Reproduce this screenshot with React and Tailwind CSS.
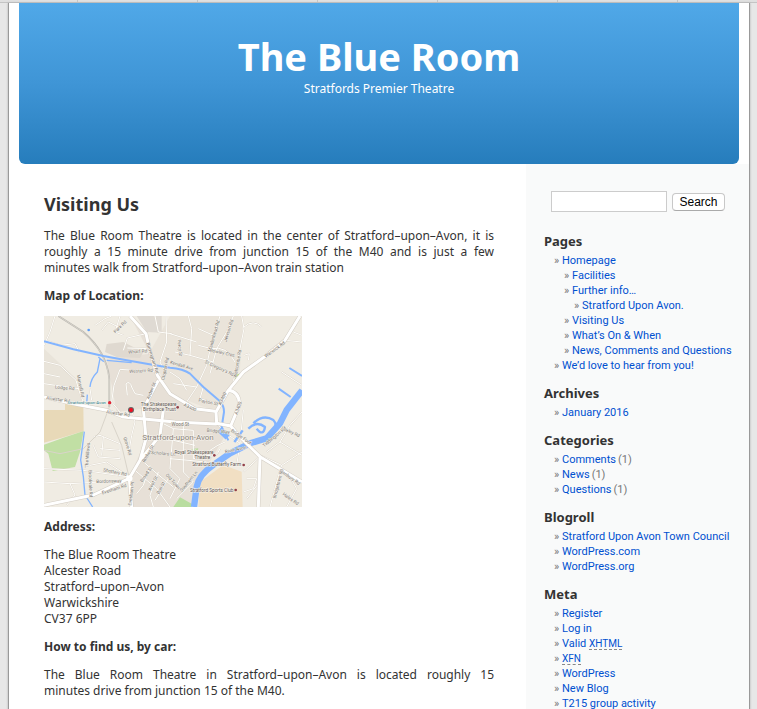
import React from "react";

const sans = "font-['Noto_Sans','Open_Sans',sans-serif]";

const sections = [
  {
    title: "Pages",
    items: [
      {
        label: "Homepage",
        children: [
          { label: "Facilities" },
          { label: "Further info…", children: [{ label: "Stratford Upon Avon." }] },
          { label: "Visiting Us" },
          { label: "What’s On & When" },
          { label: "News, Comments and Questions" },
        ],
      },
      { label: "We’d love to hear from you!" },
    ],
  },
  { title: "Archives", items: [{ label: "January 2016" }] },
  {
    title: "Categories",
    items: [
      { label: "Comments", count: 1 },
      { label: "News", count: 1 },
      { label: "Questions", count: 1 },
    ],
  },
  {
    title: "Blogroll",
    items: [
      { label: "Stratford Upon Avon Town Council" },
      { label: "WordPress.com" },
      { label: "WordPress.org" },
    ],
  },
  {
    title: "Meta",
    items: [
      { label: "Register" },
      { label: "Log in" },
      { label: "Valid ", abbr: "XHTML" },
      { label: "", abbr: "XFN" },
      { label: "WordPress" },
      { label: "New Blog" },
      { label: "T215 group activity" },
    ],
  },
];

function LinkList({ items }) {
  return (
    <ul className="pl-[10px] font-['Roboto','Open_Sans',sans-serif]">
      {items.map((item) => (
        <li key={item.label + (item.abbr || "")}>
          <div className="flex h-[15px] items-center whitespace-nowrap">
            <span className="w-2 shrink-0 text-[#777777]">»</span>
            <a href="#" className="text-[#0050d0] hover:underline">
              {item.label}
              {item.abbr && (
                <abbr className="border-b border-dashed border-[#888888] text-[10px] leading-none no-underline">
                  {item.abbr}
                </abbr>
              )}
            </a>
            {item.count && <span className="pl-0.5 text-[#777777]">({item.count})</span>}
          </div>
          {item.children && <LinkList items={item.children} />}
        </li>
      ))}
    </ul>
  );
}

const minorRoads = [
  "M12 100L30 60L45 12M25 88L60 100L105 95L118 120M12 148L60 160L108 205L120 245L130 270",
  "M165 40L195 20L215 12M185 55L205 30L235 45M240 12L225 60L250 70",
  "M318 65L262 78L250 115M330 110L262 108M350 180L240 172L222 220L215 270L240 300",
  "M262 250L258 215Q270 205 275 225L285 245L310 250M378 12L380 90L360 150L375 180",
  "M345 12L355 60L395 65M12 215L60 222L130 232M150 230L155 265M12 185L60 195",
  "M445 12L455 50L450 130L520 150M540 12L515 90L500 160L470 225M580 12L560 60L530 110L510 185",
  "M475 50L520 70M475 100L515 110M515 110Q560 100 585 150M500 150L580 190M605 12L612 50L600 110L585 190L575 225",
  "M612 45Q640 20 665 45M612 130L628 125L625 145M390 65L470 90M405 120L450 130M390 180L420 200L440 235M470 225L400 215M470 225L440 270M490 225L480 260L530 275",
  "M160 375L180 370L240 395L240 440L175 435L160 400M190 375L185 430M180 410L240 415",
  "M275 294L285 330L275 370L265 430M268 495L130 475L12 470M268 495L200 450L150 460M250 505L180 510L90 515L12 510M90 515L105 549L80 580",
  "M305 445L345 480L400 525M285 475L350 530L390 585M330 460L310 520L290 545M355 480L330 550L340 585M385 500L345 565M318 380L400 385L465 400M360 330L400 350L460 355L460 440M400 350L390 470L420 500L390 560M430 340L430 480L460 510L410 560M460 440L510 430M390 440L500 450",
  "M530 334L560 365L600 394L590 460M600 394L610 294M660 434L610 480M620 500L650 500L640 530L610 540M655 515L620 560M690 585L710 510L725 460L660 430M740 585L770 530L750 495M786 420L725 460M680 420L720 390L750 340L786 300M720 390L786 430",
  "M735 85L786 90M760 60L786 70M540 410Q530 440 500 430M555 390Q530 400 510 415M725 180L786 220",
];

const mapLabels = [
  ["Park Rd", 240, 44, -45], ["Wharf Rd", 293, 118, -5], ["Birmingham Rd", 338, 138, 72],
  ["Western Rd", 303, 176, -3], ["Clopton Rd", 375, 170, -78], ["Lodge Rd", 74, 227, 5],
  ["Alcester Rd", 54, 262, 8], ["Mansell Rd", 122, 222, 78], ["Arden St", 333, 236, -68],
  ["Alcester Rd", 234, 304, 8], ["Maidenhead Rd", 521, 72, -74], ["Jewson Rd", 565, 56, -72],
  ["Percy St", 420, 108, 85], ["Rowley Cres", 547, 122, 12], ["St Gregory's Rd", 538, 168, 25],
  ["Welcombe Rd", 592, 155, -80], ["Warwick Rd", 704, 112, -36], ["Kendall Ave", 425, 160, 17],
  ["Payton St", 505, 270, 12], ["A3400", 450, 286, 25], ["A3400", 547, 260, -65],
  ["A3400", 594, 288, -70], ["The Willows", 142, 430, -86], ["Shottery Rd", 225, 480, 12],
  ["Bordonsway", 207, 507, -2], ["Evesham Rd", 222, 531, -18], ["Evesham Pl", 273, 545, -83],
  ["Rother St", 324, 425, -60], ["Grove Rd", 263, 402, 72], ["Scholars Ln", 370, 424, 5],
  ["Broad St", 318, 487, -55], ["West St", 338, 514, -62], ["Bull St", 362, 528, -62],
  ["Old Town", 399, 508, 48], ["Wood St", 421, 336, 0], ["Southern Ln", 446, 508, -50],
  ["Tiddington Rd", 703, 374, -40], ["Loxley Rd", 752, 359, 25], ["Banbury Rd", 750, 495, 35],
  ["Bridgetown Rd", 714, 515, -75], ["Hales Rd", 752, 560, 35], ["River Avon", 587, 412, -12],
  ["Bridge Foot", 604, 374, 34], ["Bridge Way", 535, 357, 5], ["Brookvale Rd", 152, 515, 88],
];

function LocationMap() {
  return (
    <svg
      role="img"
      aria-label="Map of Stratford-upon-Avon"
      viewBox="12 12 774 573"
      preserveAspectRatio="none"
      className="block h-[191px] w-[258px] font-['Roboto',sans-serif]"
    >
      <rect x="12" y="12" width="774" height="573" fill="#f0ece3" />
      <path d="M270 12L318 65L355 200L400 240L465 285L525 294L550 380L500 465L462 585H270L268 499L318 380L310 290L230 300L200 140L330 125Z" fill="#e7e0d7" />
      <path d="M390 12H610L600 170L530 300L390 245L330 120Z" fill="#eae4da" />
      <path d="M12 110L108 200L130 280L12 255Z" fill="#e9e4da" />
      <path d="M200 96L250 90L310 120L300 138L230 135L195 120Z" fill="#dfd9d0" />
      <path d="M290 12L365 12L365 62L320 60Z" fill="#dfdad3" />
      <path d="M12 294H75V275L130 282L131 357L70 376L12 392Z" fill="#e8d9b8" />
      <path d="M12 398L70 377L131 357L120 420L105 465L38 477L25 425L12 415Z" fill="#c1dfa4" />
      <path d="M550 459L605 479L608 585H475L480 510Z" fill="#f1dfc3" />
      <path d="M420 556L455 575V585H400ZM455 411L475 409L470 423H456Z" fill="#b9dda0" />
      <path d="M583 190L603 184L600 194L584 202Z" fill="#a9d77d" />

      <g fill="none" stroke="#dcd6cc" strokeWidth="5" strokeLinejoin="round">
        {minorRoads.map((d) => <path key={d} d={d} />)}
      </g>
      <g fill="none" stroke="#fffefb" strokeWidth="3" strokeLinejoin="round">
        {minorRoads.map((d) => <path key={d} d={d} />)}
      </g>
      <path d="M12 415L60 425L130 410L180 360L208 285M215 330L245 400L268 499" fill="none" stroke="#d9d4ca" strokeWidth="3" />
      <path d="M55 12L130 60Q200 120 208 200L208 285" fill="none" stroke="#b8b5ae" strokeWidth="5" />
      <path d="M55 12L130 60Q200 120 208 200L208 285" fill="none" stroke="#e4e1da" strokeWidth="2" />

      <g fill="none" stroke="#82b4ff" strokeLinejoin="round">
        <path d="M12 88L100 112L190 132L260 145L320 155L390 167Q430 170 450 185L490 225L540 268Q552 280 552 300L545 345L565 385" strokeWidth="6" />
        <path d="M175 135L190 148L180 140L172 180Q152 200 150 225M142 248L140 275M133 359L122 444L130 494L135 549L158 585M200 145L275 152" strokeWidth="4" />
        <path d="M786 235L740 294L720 334L680 379L630 394L570 424L520 459Q475 490 470 525L462 585" strokeWidth="19" />
        <path d="M748 168L786 192M716 230L752 255" strokeWidth="6" />
        <path d="M680 376Q720 345 700 324Q670 305 640 334M625 350Q650 325 675 345Q670 375 650 350M583 390L608 355" strokeWidth="7" />
        <path d="M538 352L563 376" strokeWidth="18" />
      </g>

      <g fill="none" stroke="#d3cdc4" strokeWidth="12" strokeLinejoin="round">
        <path d="M270 12L318 65L330 120L352 190L390 245L465 290L525 298M780 12L735 85L680 130L610 180L565 235L528 300L530 334L572 342L600 375L660 434L786 510M12 255L100 275L200 295L250 315L405 330L530 336M355 205L310 290L318 380L300 445L268 499L160 549L12 580M268 499L275 585M370 294L360 370L300 445M565 235Q600 240 598 280L572 342M660 434L655 585" />
      </g>
      <g fill="none" stroke="#ffffff" strokeWidth="9" strokeLinejoin="round">
        <path d="M270 12L318 65L330 120L352 190L390 245L465 290L525 298M780 12L735 85L680 130L610 180L565 235L528 300L530 334L572 342L600 375L660 434L786 510M12 255L100 275L200 295L250 315L405 330L530 336M355 205L310 290L318 380L300 445L268 499L160 549L12 580M268 499L275 585M370 294L360 370L300 445M565 235Q600 240 598 280L572 342M660 434L655 585" />
        <circle cx="268" cy="499" r="5" fill="#d3cdc4" />
      </g>

      <g fill="#77736d" stroke="#f7f4ee" strokeWidth="2" paintOrder="stroke" fontSize="14" textAnchor="middle">
        {mapLabels.map(([text, x, y, angle]) => (
          <text key={`${text}-${x}`} transform={`translate(${x} ${y}) rotate(${angle})`} y="5">{text}</text>
        ))}
      </g>
      <g fill="#5d5550" stroke="#f7f4ee" strokeWidth="3" paintOrder="stroke" fontSize="14" textAnchor="middle">
        <text x="140" y="277" fill="#277b89" fontSize="13">Stratford-upon-Avon</text>
        <text x="356" y="282">The Shakespeare</text>
        <text x="358" y="298">Birthplace Trust</text>
        <text x="462" y="426">Royal Shakespeare</text>
        <text x="487" y="442">Theatre</text>
        <text x="530" y="463">Stratford Butterfly Farm</text>
        <text x="515" y="540">Stratford Sports Club</text>
        <text x="414" y="384" fontSize="24" fill="#898279">Stratford-upon-Avon</text>
      </g>
      <g fill="#92404a">
        <circle cx="413" cy="286" r="4" />
        <circle cx="523" cy="430" r="4" />
        <circle cx="611" cy="459" r="4" />
        <circle cx="587" cy="534" r="4" />
      </g>
      <circle cx="146" cy="54" r="4" fill="#5c9df7" />
      <circle cx="209" cy="272" r="5" fill="#e02433" />
      <circle cx="273" cy="294" r="9" fill="#666666" />
      <circle cx="273" cy="294" r="6" fill="#f20f22" />
    </svg>
  );
}

export default function App() {
  return (
    <div className={`h-screen overflow-hidden bg-[#e7e7e7] text-[#333333] ${sans}`}>
      <div className="flex h-[3px] border-b border-[#c4c4c4] bg-[#e0e0e0] pl-[77px]">
        {[0, 1, 2, 3, 4, 5].map((tab) => (
          <div key={tab} className="w-[120px] shrink-0 border-l border-[#c4c4c4]" />
        ))}
      </div>

      <div className="mr-[7px] ml-2 flex h-full flex-col border-x border-[#999999] bg-white shadow-[0_0_2px_#aaaaaa]">
        <header className="mx-[10px] h-[161px] shrink-0 rounded-b-md bg-linear-to-b from-[#50a8e8] via-[#3f95d6] to-[#267dbc] pt-[30px] text-center text-white">
          <h1 className="mb-[2px] text-[38px] leading-[46px] font-bold">
            <a href="#">The Blue Room</a>
          </h1>
          <p className="text-[12px] leading-4">Stratfords Premier Theatre</p>
        </header>

        <div className="flex grow">
          <main className="min-w-0 flex-1 pr-8 pl-[35px] text-[12px] leading-4">
            <h2 className="mt-7 mb-3 text-[18px] leading-6 font-bold">Visiting Us</h2>
            <p className="mb-3 text-justify">
              The Blue Room Theatre is located in the center of Stratford–upon–Avon, it is roughly a 15
              minute drive from junction 15 of the M40 and is just a few{" "}
              <span className="whitespace-nowrap">minutes walk</span> from Stratford–upon–Avon train
              station
            </p>
            <p className="mb-3 font-bold">Map of Location:</p>
            <LocationMap />
            <p className="my-3 font-bold">Address:</p>
            <address className="mb-3 not-italic">
              The Blue Room Theatre
              <br />
              Alcester Road
              <br />
              Stratford–upon–Avon
              <br />
              Warwickshire
              <br />
              CV37 6PP
            </address>
            <p className="mb-3 font-bold">How to find us, by car:</p>
            <p className="text-justify">
              The Blue Room Theatre in Stratford–upon–Avon is located roughly 15{" "}
              <span className="whitespace-nowrap">minutes drive</span> from junction 15 of the M40.
            </p>
          </main>

          <aside className="w-[223px] shrink-0 bg-[#f9fafa] pl-[18px] text-[11px] leading-[15px]">
            <form className="mt-[27px] mb-[19px] flex items-center gap-[5px] pl-[7px]" onSubmit={(e) => e.preventDefault()}>
              <input
                type="text"
                aria-label="Search"
                className="h-[21px] w-[116px] border border-[#cccccc] bg-white px-1 outline-none"
              />
              <button
                type="submit"
                className="h-[18px] w-[53px] rounded border border-[#c8c8c8] border-b-[#aaaaaa] bg-white font-['Liberation_Sans',sans-serif] text-[12px] leading-4 text-black"
              >
                Search
              </button>
            </form>
            {sections.map((section) => (
              <section key={section.title} className="mb-[10px]">
                <h2 className="mb-[2px] text-[13px] leading-5 font-bold">{section.title}</h2>
                <LinkList items={section.items} />
              </section>
            ))}
          </aside>
        </div>
      </div>
    </div>
  );
}
